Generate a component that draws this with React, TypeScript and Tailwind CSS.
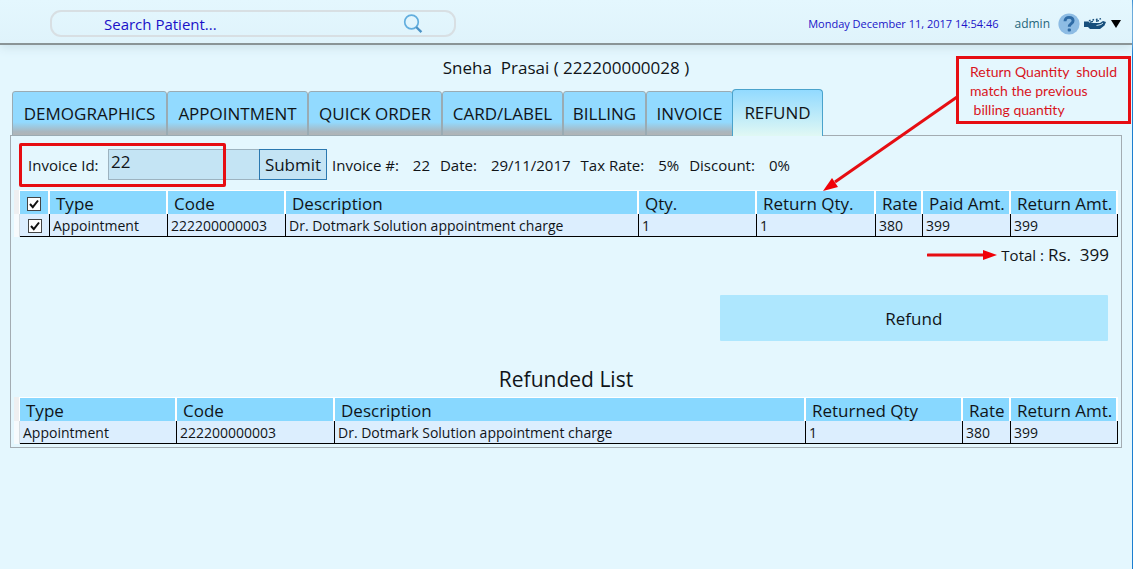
import { useState } from "react";
import type { ReactNode } from "react";

const tabs = [
  { label: "DEMOGRAPHICS", width: "w-[155px]" },
  { label: "APPOINTMENT", width: "w-[141px]" },
  { label: "QUICK ORDER", width: "w-[134px]" },
  { label: "CARD/LABEL", width: "w-[121px]" },
  { label: "BILLING", width: "w-[83px]" },
  { label: "INVOICE", width: "w-[87px]" },
];

const summary = [
  { label: "Invoice #:", value: "22" },
  { label: "Date:", value: "29/11/2017" },
  { label: "Tax Rate:", value: "5%" },
  { label: "Discount:", value: "0%" },
];

function HeadCell({ children }: { children?: ReactNode }) {
  return (
    <th className="h-6 overflow-visible whitespace-nowrap border-r-2 border-t border-white bg-[#88d8ff] px-[6px] pt-[2px] text-left text-[17px] font-normal leading-5">
      {children}
    </th>
  );
}

function Cell({ children }: { children?: ReactNode }) {
  return (
    <td className="h-[23px] whitespace-nowrap border-b border-r border-black bg-[#dceefe] px-[3px] pt-[2px] text-sm leading-5">
      {children}
    </td>
  );
}

function Check({ label }: { label: string }) {
  const [on, setOn] = useState(true);
  return (
    <label className="relative mx-auto flex size-[14px] items-center justify-center border border-[#444] bg-white">
      <input
        type="checkbox"
        aria-label={label}
        checked={on}
        onChange={(e) => setOn(e.target.checked)}
        className="absolute inset-0 size-full appearance-none"
      />
      {on && (
        <svg viewBox="0 0 12 12" className="pointer-events-none relative size-3" fill="none" stroke="#111" strokeWidth="2">
          <path d="M2 6l2.8 3.2L10 2.5" />
        </svg>
      )}
    </label>
  );
}

function Header() {
  return (
    <header className="flex h-[45px] items-center justify-between border-b-2 border-[#8a9496] bg-[linear-gradient(#e4f7fe,#dff3fb)] pl-[50px] pr-[11px] shadow-[0_2px_10px_#c9dfe8]">
      <div className="mt-1 flex h-[27px] w-[406px] items-center rounded-[11px] border-2 border-[#d8dfe3] pl-[52px] pr-[31px]">
        <input
          type="text"
          aria-label="Search Patient"
          placeholder="Search Patient..."
          className="min-w-0 flex-1 bg-transparent text-[15px] leading-5 text-[#1a10c8] outline-none placeholder:text-[#1a10c8]"
        />
        <button type="button" aria-label="Search">
          <svg viewBox="0 0 20 20" className="size-5" fill="none">
            <circle cx="8.5" cy="8" r="6.8" stroke="#62aede" strokeWidth="1.7" />
            <path d="M13.2 13l5.2 5.2" stroke="#4c93c6" strokeWidth="2.4" />
          </svg>
        </button>
      </div>
      <div className="mt-1 flex items-center">
        <time className="mr-4 text-[11px] leading-5 text-[#2014c8]">Monday December 11, 2017 14:54:46</time>
        <span className="mr-2 text-xs leading-5 text-[#26667a]">admin</span>
        <button type="button" aria-label="Help" className="mr-1">
          <svg viewBox="0 0 22 22" className="size-[22px]">
            <circle cx="11" cy="11" r="10.6" fill="#8dbce4" />
            <path d="M7 8.2C7 5.6 8.8 4.4 11 4.4s4.1 1.2 4.1 3.4c0 2.9-3.8 2.8-3.8 5.9" fill="none" stroke="#2f6ca6" strokeWidth="2.9" />
            <rect x="9.7" y="15.6" width="3.2" height="3" rx="1" fill="#2f6ca6" />
          </svg>
        </button>
        <button type="button" aria-label="Account menu" className="flex items-center gap-1">
          <svg viewBox="0 0 23 14" className="h-[14px] w-[23px]">
            <path d="M0 4.5h4.500L6 6h10l3-2 3 1-1.500 3.500L16 12H6l-2-2H0z" fill="#174f7c" />
            <path d="M5 4l1.500-1M8.500 3.300l1.500-1M12 2.800l1.500-1M15.500 2.200l1.500-.6M6 5.200l3-.8M12 4.200l3-.6" stroke="#174f7c" strokeWidth="1.400" />
            <path d="M12.500 8.500l4.500-1 2-1.500" fill="none" stroke="#dff3fb" strokeWidth=".9" />
          </svg>
          <svg viewBox="0 0 10 8" className="h-2 w-[10px]">
            <path d="M0 0h10L5 8z" fill="#000" />
          </svg>
        </button>
      </div>
    </header>
  );
}

export default function App() {
  const [invoiceId, setInvoiceId] = useState("22");
  return (
    <div className="relative min-h-screen border-r border-[#1c7fd0] bg-[#e4f7fe] font-['Open_Sans','Noto_Sans',sans-serif] text-[#101418]">
      <Header />

      <h1 className="pt-3 text-center text-[17px] leading-[22px] whitespace-pre">Sneha  Prasai ( 222200000028 )</h1>

      <main className="pb-4 pl-[10px] pr-[10px] pt-[10px]">
        <nav className="relative z-10 -mb-px flex items-end pl-[2px]">
          {tabs.map((t) => (
            <button
              key={t.label}
              type="button"
              className={`${t.width} h-[45px] whitespace-nowrap rounded-t-[3px] border border-[#9aabb3] bg-[linear-gradient(#92daff_70%,#a9b7bf_92%,#b0b4b6)] text-[17px] leading-6`}
            >
              {t.label}
            </button>
          ))}
          <button
            type="button"
            className="-ml-px h-[47px] w-[91px] whitespace-nowrap rounded-t-[4px] border border-b-0 border-[#4aa3cc] bg-[linear-gradient(#92daff,#e0f8f4)] text-[17px] leading-6"
          >
            REFUND
          </button>
        </nav>

        <section className="border border-[#a3acb2] pb-[3px] pl-[3px] pr-[3px] pt-[7px]">
          <form className="flex items-center pr-2 text-[15px] leading-5" onSubmit={(e) => e.preventDefault()}>
            <div className="relative flex h-11 items-center pl-[14px]">
              <label htmlFor="invoice-id" className="w-20">
                Invoice Id:
              </label>
              <input
                id="invoice-id"
                value={invoiceId}
                onChange={(e) => setInvoiceId(e.target.value)}
                className="-mt-px h-[31px] w-[151px] border border-r-0 border-[#9db3c0] bg-[#c4e4f4] px-[2px] pb-[6px] text-[17px] outline-none"
              />
              <div className="pointer-events-none absolute left-[5px] top-0 h-11 w-[207px] rounded-[2px] border-[3px] border-[#e60d12]" />
            </div>
            <button type="submit" className="-mt-px h-[31px] w-[68px] border border-[#2a78b0] bg-[#c4e4f4] text-[17px] leading-6">
              Submit
            </button>
            <dl className="flex items-center gap-[10px] pl-[5px]">
              {summary.map((s) => (
                <div key={s.label} className="flex gap-[14px] whitespace-nowrap">
                  <dt>{s.label}</dt>
                  <dd>{s.value}</dd>
                </div>
              ))}
            </dl>
          </form>

          <div className="pt-[3px]">
            <table className="w-full table-fixed border-separate border-spacing-0">
              <colgroup>
                <col className="w-[6px]" />
                <col className="w-[30px]" />
                <col className="w-[118px]" />
                <col className="w-[118px]" />
                <col />
                <col className="w-[118px]" />
                <col className="w-[119px]" />
                <col className="w-[47px]" />
                <col className="w-[88px]" />
                <col className="w-[107px]" />
              </colgroup>
              <thead>
                <tr>
                  <td className="border-r border-white bg-[#eeeff0]" />
                  <HeadCell><Check label="Select all" /></HeadCell>
                  <HeadCell>Type</HeadCell>
                  <HeadCell>Code</HeadCell>
                  <HeadCell>Description</HeadCell>
                  <HeadCell>Qty.</HeadCell>
                  <HeadCell>Return Qty.</HeadCell>
                  <HeadCell>Rate</HeadCell>
                  <HeadCell>Paid Amt.</HeadCell>
                  <HeadCell>Return Amt.</HeadCell>
                </tr>
              </thead>
              <tbody>
                <tr>
                  <td className="border-r border-[#d5dde2] bg-[#f6fafc]" />
                  <Cell><Check label="Select Appointment" /></Cell>
                  <Cell>Appointment</Cell>
                  <Cell>222200000003</Cell>
                  <Cell>Dr. Dotmark Solution appointment charge</Cell>
                  <Cell>1</Cell>
                  <Cell>1</Cell>
                  <Cell>380</Cell>
                  <Cell>399</Cell>
                  <Cell>399</Cell>
                </tr>
              </tbody>
            </table>
          </div>

          <div className="flex items-center justify-end gap-1 pr-[9px] pt-[6px]">
            <svg viewBox="0 0 70 12" className="h-3 w-[70px]">
              <path d="M1 6h58" stroke="#e60d12" strokeWidth="3" strokeLinecap="round" />
              <path d="M56 1l14 5-14 5z" fill="#f00008" />
            </svg>
            <span className="text-[15px] leading-6">Total :</span>
            <span className="whitespace-pre text-[17px] leading-6">Rs.  399</span>
          </div>

          <div className="flex justify-end pr-[10px] pt-7">
            <button type="button" className="h-[46px] w-[35.5%] rounded-[1px] bg-[#aee7fe] pt-[2px] text-[17px]">
              Refund
            </button>
          </div>

          <h2 className="pb-1 pt-6 text-center text-[21px] leading-7">Refunded List</h2>

          <div>
            <table className="w-full table-fixed border-separate border-spacing-0">
              <colgroup>
                <col className="w-[6px]" />
                <col className="w-[157px]" />
                <col className="w-[158px]" />
                <col />
                <col className="w-[157px]" />
                <col className="w-[48px]" />
                <col className="w-[107px]" />
              </colgroup>
              <thead>
                <tr>
                  <td className="border-r border-white bg-[#eeeff0]" />
                  <HeadCell>Type</HeadCell>
                  <HeadCell>Code</HeadCell>
                  <HeadCell>Description</HeadCell>
                  <HeadCell>Returned Qty</HeadCell>
                  <HeadCell>Rate</HeadCell>
                  <HeadCell>Return Amt.</HeadCell>
                </tr>
              </thead>
              <tbody>
                <tr>
                  <td className="border-r border-[#d5dde2] bg-[#f6fafc]" />
                  <Cell>Appointment</Cell>
                  <Cell>222200000003</Cell>
                  <Cell>Dr. Dotmark Solution appointment charge</Cell>
                  <Cell>1</Cell>
                  <Cell>380</Cell>
                  <Cell>399</Cell>
                </tr>
              </tbody>
            </table>
          </div>
        </section>
      </main>

      <aside className="absolute right-px top-14 z-20 h-[68px] w-[175px] whitespace-pre border-[3px] border-[#e60d12] pl-[11px] pt-[3px] font-[Lato,sans-serif] text-sm leading-[19px] text-[#d8141c]">
        {"Return Quantity  should\nmatch the previous\n billing quantity"}
      </aside>
      <svg viewBox="0 0 136 96" className="pointer-events-none absolute right-[173px] top-24 z-20 h-24 w-[136px]">
        <path d="M134 1L12 86" stroke="#e60d12" strokeWidth="3" />
        <path d="M0 95L9 82l6 9z" fill="#f00008" />
      </svg>
    </div>
  );
}
